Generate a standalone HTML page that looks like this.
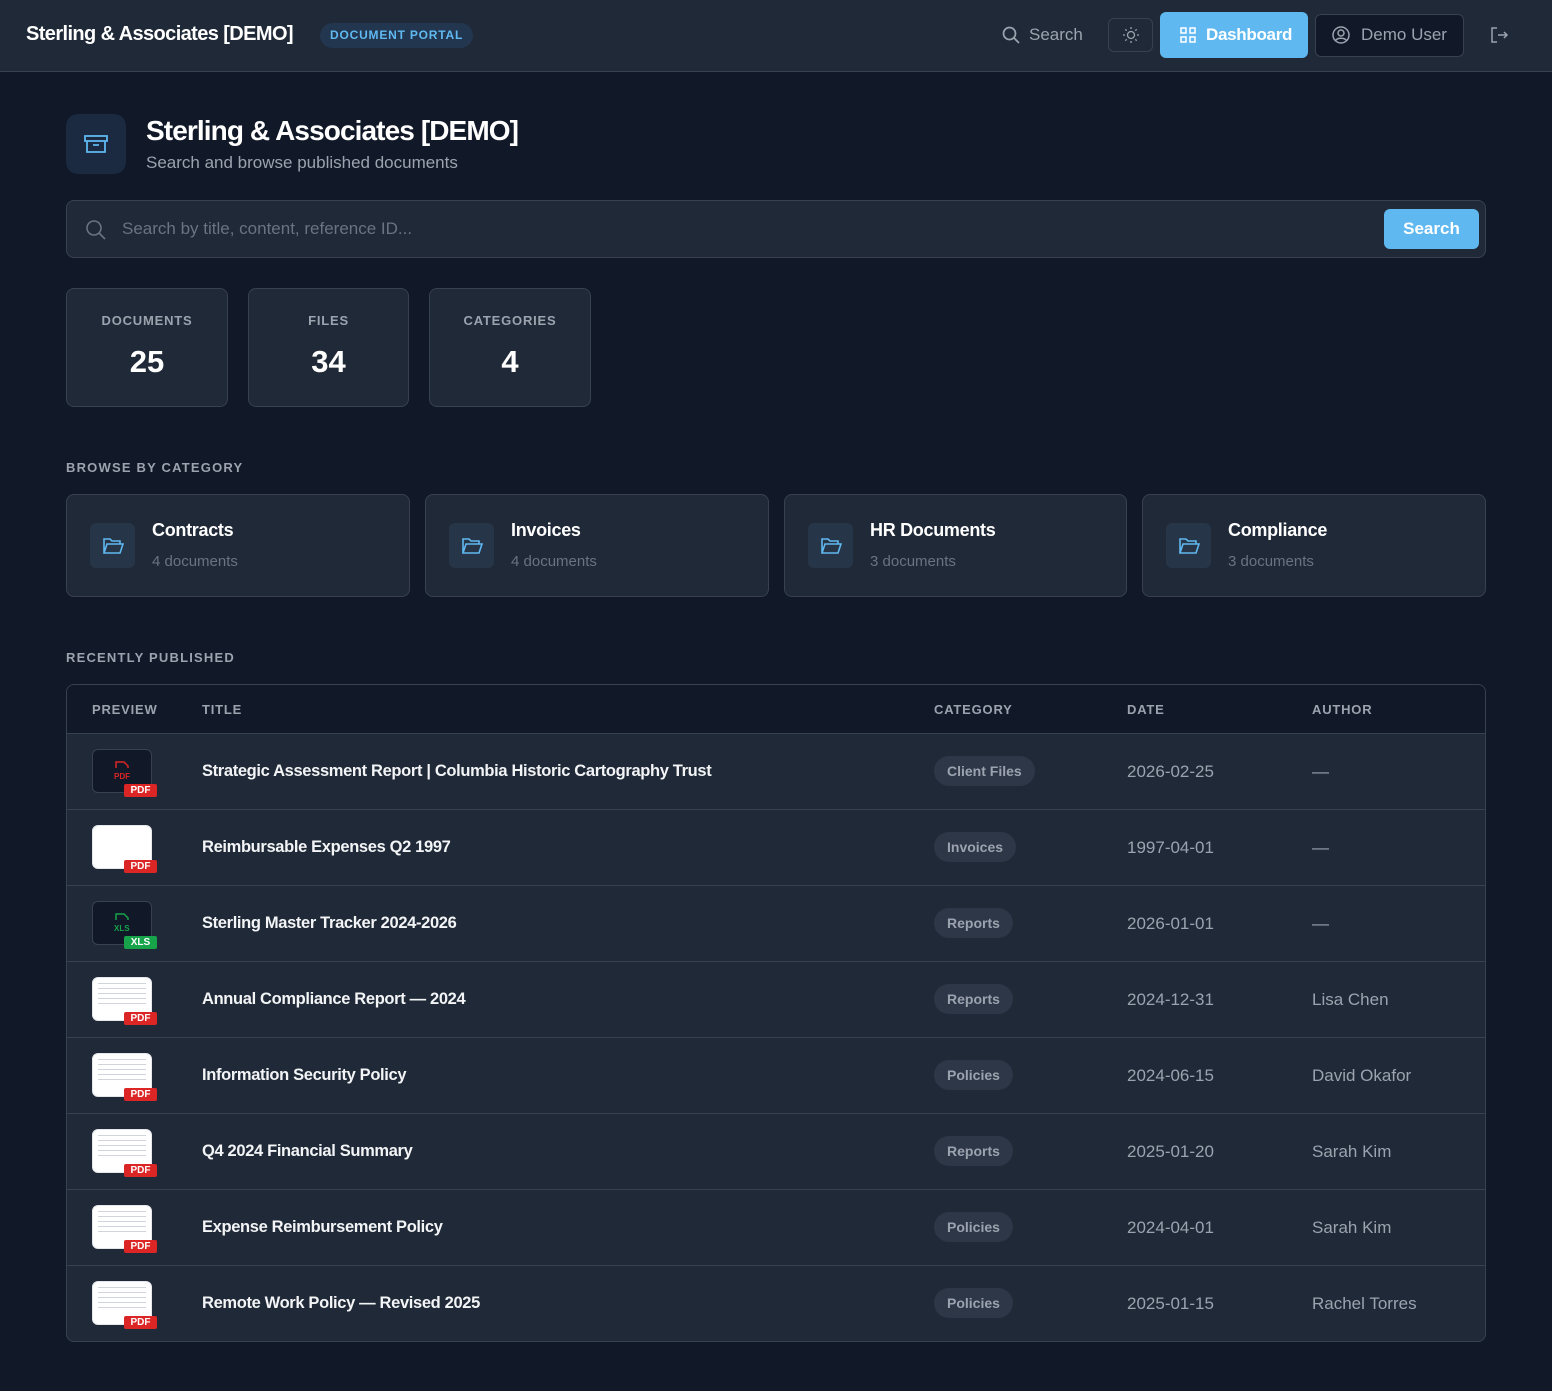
<!DOCTYPE html>
<html><head><meta charset="utf-8"><style>
*{box-sizing:border-box;margin:0;padding:0}
body{width:1552px;height:1391px;background:#111827;font-family:"Liberation Sans",sans-serif;color:#f3f4f6;position:relative;overflow:hidden}
.hdr{position:absolute;left:0;top:0;width:1552px;height:72px;background:#1f2937;border-bottom:1px solid #374151}
.abs{position:absolute}
.card{position:absolute;background:#1f2937;border:1px solid #374151;border-radius:8px}
.lbl{font-size:13px;font-weight:bold;letter-spacing:0.8px;color:#9ca3af}
.sec{position:absolute;left:66px;font-size:13px;font-weight:bold;letter-spacing:1.2px;color:#9ca3af}
.stat{text-align:center}
.stat .lbl{margin-top:24px;font-size:13px}
.stat .n{font-size:31px;font-weight:bold;color:#fff;margin-top:16px}
.cat .ic{position:absolute;left:23px;top:28px;width:45px;height:45px;border-radius:6px;background:#263548}
.cat .t{position:absolute;left:85px;top:25px;font-size:18px;font-weight:bold;color:#fff;letter-spacing:-0.3px}
.cat .s{position:absolute;left:85px;top:58px;font-size:15px;color:#6b7280}
.row{position:absolute;left:0;width:1418px;height:76px;border-top:1px solid #374151}
.thumb{position:absolute;left:25px;top:15px;width:60px;height:44px;border-radius:6px;background:#111827;border:1px solid #374151}
.thumb.w{background:#fff;border-color:#e5e7eb}
.bd{position:absolute;left:57px;top:50px;width:33px;height:13px;border-radius:2px;background:#dc2626;color:#fff;font-size:10px;font-weight:bold;text-align:center;line-height:13px}
.bd.g{background:#16a34a}
.rt{position:absolute;left:135px;top:28px;font-size:16.5px;font-weight:bold;color:#f3f4f6;letter-spacing:-0.35px}
.pill{position:absolute;left:867px;top:22px;height:30px;padding:0 13px;border-radius:15px;background:#2d3748;color:#9ca3af;font-size:14px;font-weight:bold;line-height:30px}
.dt{position:absolute;left:1060px;top:28px;font-size:17px;color:#9ca3af}
.au{position:absolute;left:1245px;top:28px;font-size:17px;color:#9ca3af}
.lines{position:absolute;left:5px;top:5px;right:5px}
.lines i{display:block;height:1px;background:#d1d5db;margin-bottom:4px}
</style></head><body>
<div class="hdr">
  <div class="abs" style="left:26px;top:23px;font-size:20px;font-weight:bold;color:#fff;letter-spacing:-0.6px">Sterling &amp; Associates [DEMO]</div>
  <div class="abs" style="left:320px;top:23px;height:25px;padding:0 10px;border-radius:13px;background:#23364f;color:#60b8f0;font-size:12px;font-weight:bold;letter-spacing:0.8px;line-height:25px">DOCUMENT PORTAL</div>
  <svg class="abs" style="left:1001px;top:25px" width="20" height="20" viewBox="0 0 20 20" fill="none" stroke="#9ca3af" stroke-width="1.7"><circle cx="8.5" cy="8.5" r="6"/><path d="M13 13l5 5"/></svg>
  <div class="abs" style="left:1029px;top:25px;font-size:17px;color:#9ca3af">Search</div>
  <div class="abs" style="left:1108px;top:18px;width:45px;height:34px;border:1px solid #374151;border-radius:6px"></div>
  <svg class="abs" style="left:1121px;top:25px" width="20" height="20" viewBox="0 0 20 20" fill="none" stroke="#9ca3af" stroke-width="1.3"><circle cx="10" cy="10" r="3.5"/><path d="M10 2v2M10 16v2M2 10h2M16 10h2M4.3 4.3l1.4 1.4M14.3 14.3l1.4 1.4M4.3 15.7l1.4-1.4M14.3 5.7l1.4-1.4"/></svg>
  <div class="abs" style="left:1160px;top:12px;width:148px;height:46px;border-radius:6px;background:#60b8f0"></div>
  <svg class="abs" style="left:1180px;top:27px" width="16" height="16" viewBox="0 0 16 16" fill="none" stroke="#fff" stroke-width="1.5"><rect x="1" y="1" width="5" height="5"/><rect x="10" y="1" width="5" height="5"/><rect x="1" y="10" width="5" height="5"/><rect x="10" y="10" width="5" height="5"/></svg>
  <div class="abs" style="left:1206px;top:25px;font-size:17px;font-weight:bold;color:#fff;letter-spacing:-0.3px">Dashboard</div>
  <div class="abs" style="left:1315px;top:14px;width:149px;height:43px;border:1px solid #374151;border-radius:6px;background:#111827"></div>
  <svg class="abs" style="left:1331px;top:25px" width="20" height="20" viewBox="0 0 20 20" fill="none" stroke="#9ca3af" stroke-width="1.5"><circle cx="10" cy="10" r="8"/><circle cx="10" cy="8" r="3"/><path d="M4.5 15.5c2-3 9-3 11 0"/></svg>
  <div class="abs" style="left:1361px;top:25px;font-size:17px;color:#9ca3af">Demo User</div>
  <svg class="abs" style="left:1489px;top:25px" width="20" height="20" viewBox="0 0 20 20" fill="none" stroke="#9ca3af" stroke-width="1.5"><path d="M8 3H3v14h5M9 10h9M15 7l3 3-3 3"/></svg>
</div>

<div class="abs" style="left:66px;top:114px;width:60px;height:60px;border-radius:12px;background:#1b2a40"></div>
<svg class="abs" style="left:84px;top:132px" width="24" height="24" viewBox="0 0 24 24" fill="none" stroke="#60b8f0" stroke-width="1.8"><rect x="1" y="4" width="22" height="5"/><path d="M3 9v11h18V9M9 13h6"/></svg>
<div class="abs" style="left:146px;top:115px;font-size:28px;font-weight:bold;color:#fff;letter-spacing:-0.9px">Sterling &amp; Associates [DEMO]</div>
<div class="abs" style="left:146px;top:153px;font-size:17px;color:#9ca3af">Search and browse published documents</div>

<div class="card" style="left:66px;top:200px;width:1420px;height:58px"></div>
<svg class="abs" style="left:85px;top:219px" width="22" height="22" viewBox="0 0 22 22" fill="none" stroke="#6b7280" stroke-width="1.6"><circle cx="9" cy="9" r="7"/><path d="M14 14l6 6"/></svg>
<div class="abs" style="left:122px;top:219px;font-size:17px;color:#6b7280">Search by title, content, reference ID...</div>
<div class="abs" style="left:1384px;top:209px;width:95px;height:40px;border-radius:6px;background:#60b8f0;color:#fff;font-size:17px;font-weight:bold;text-align:center;line-height:40px">Search</div>

<div class="card stat" style="left:66px;top:288px;width:162px;height:119px"><div class="lbl">DOCUMENTS</div><div class="n">25</div></div>
<div class="card stat" style="left:248px;top:288px;width:161px;height:119px"><div class="lbl">FILES</div><div class="n">34</div></div>
<div class="card stat" style="left:429px;top:288px;width:162px;height:119px"><div class="lbl">CATEGORIES</div><div class="n">4</div></div>

<div class="sec" style="top:460px">BROWSE BY CATEGORY</div>
<div class="card cat" style="left:66px;top:494px;width:344px;height:103px"><div class="ic"></div><div class="t">Contracts</div><div class="s">4 documents</div></div>
<div class="card cat" style="left:425px;top:494px;width:344px;height:103px"><div class="ic"></div><div class="t">Invoices</div><div class="s">4 documents</div></div>
<div class="card cat" style="left:784px;top:494px;width:343px;height:103px"><div class="ic"></div><div class="t">HR Documents</div><div class="s">3 documents</div></div>
<div class="card cat" style="left:1142px;top:494px;width:344px;height:103px"><div class="ic"></div><div class="t">Compliance</div><div class="s">3 documents</div></div>
<svg class="abs" style="left:102px;top:536px" width="22" height="20" viewBox="0 0 22 20" fill="none" stroke="#60b8f0" stroke-width="1.6"><path d="M2 17V3h6l2 2h8v3M2 17l3-9h16l-3 9z"/></svg>
<svg class="abs" style="left:461px;top:536px" width="22" height="20" viewBox="0 0 22 20" fill="none" stroke="#60b8f0" stroke-width="1.6"><path d="M2 17V3h6l2 2h8v3M2 17l3-9h16l-3 9z"/></svg>
<svg class="abs" style="left:820px;top:536px" width="22" height="20" viewBox="0 0 22 20" fill="none" stroke="#60b8f0" stroke-width="1.6"><path d="M2 17V3h6l2 2h8v3M2 17l3-9h16l-3 9z"/></svg>
<svg class="abs" style="left:1178px;top:536px" width="22" height="20" viewBox="0 0 22 20" fill="none" stroke="#60b8f0" stroke-width="1.6"><path d="M2 17V3h6l2 2h8v3M2 17l3-9h16l-3 9z"/></svg>

<div class="sec" style="top:650px">RECENTLY PUBLISHED</div>
<div class="card" style="left:66px;top:684px;width:1420px;height:658px;overflow:hidden;background:#1f2937">
  <div class="abs" style="left:0;top:0;width:1420px;height:48px;background:#111827"></div>
  <div class="abs lbl" style="left:25px;top:17px">PREVIEW</div>
  <div class="abs lbl" style="left:135px;top:17px">TITLE</div>
  <div class="abs lbl" style="left:867px;top:17px">CATEGORY</div>
  <div class="abs lbl" style="left:1060px;top:17px">DATE</div>
  <div class="abs lbl" style="left:1245px;top:17px">AUTHOR</div>

  <div class="row" style="top:48px"><div class="thumb"><svg class="abs" style="left:20px;top:10px" width="20" height="22" viewBox="0 0 20 22"><path d="M3 8V2h8l4 4v2" fill="none" stroke="#dc2626" stroke-width="1.5"/><text x="1" y="19" font-size="8" font-weight="bold" fill="#dc2626" font-family="Liberation Sans">PDF</text></svg></div><div class="bd">PDF</div><div class="rt">Strategic Assessment Report | Columbia Historic Cartography Trust</div><div class="pill">Client Files</div><div class="dt">2026-02-25</div><div class="au">—</div></div>
  <div class="row" style="top:124px"><div class="thumb w"></div><div class="bd">PDF</div><div class="rt">Reimbursable Expenses Q2 1997</div><div class="pill">Invoices</div><div class="dt">1997-04-01</div><div class="au">—</div></div>
  <div class="row" style="top:200px"><div class="thumb"><svg class="abs" style="left:20px;top:10px" width="20" height="22" viewBox="0 0 20 22"><path d="M3 8V2h8l4 4v2" fill="none" stroke="#16a34a" stroke-width="1.5"/><text x="1" y="19" font-size="8" font-weight="bold" fill="#16a34a" font-family="Liberation Sans">XLS</text></svg></div><div class="bd g">XLS</div><div class="rt">Sterling Master Tracker 2024-2026</div><div class="pill">Reports</div><div class="dt">2026-01-01</div><div class="au">—</div></div>
  <div class="row" style="top:276px"><div class="thumb w"><div class="lines"><i></i><i></i><i></i><i></i><i></i></div></div><div class="bd">PDF</div><div class="rt">Annual Compliance Report — 2024</div><div class="pill">Reports</div><div class="dt">2024-12-31</div><div class="au">Lisa Chen</div></div>
  <div class="row" style="top:352px"><div class="thumb w"><div class="lines"><i></i><i></i><i></i><i></i><i></i></div></div><div class="bd">PDF</div><div class="rt">Information Security Policy</div><div class="pill">Policies</div><div class="dt">2024-06-15</div><div class="au">David Okafor</div></div>
  <div class="row" style="top:428px"><div class="thumb w"><div class="lines"><i></i><i></i><i></i><i></i><i></i></div></div><div class="bd">PDF</div><div class="rt">Q4 2024 Financial Summary</div><div class="pill">Reports</div><div class="dt">2025-01-20</div><div class="au">Sarah Kim</div></div>
  <div class="row" style="top:504px"><div class="thumb w"><div class="lines"><i></i><i></i><i></i><i></i><i></i></div></div><div class="bd">PDF</div><div class="rt">Expense Reimbursement Policy</div><div class="pill">Policies</div><div class="dt">2024-04-01</div><div class="au">Sarah Kim</div></div>
  <div class="row" style="top:580px"><div class="thumb w"><div class="lines"><i></i><i></i><i></i><i></i><i></i></div></div><div class="bd">PDF</div><div class="rt">Remote Work Policy — Revised 2025</div><div class="pill">Policies</div><div class="dt">2025-01-15</div><div class="au">Rachel Torres</div></div>
</div>
</body></html>
